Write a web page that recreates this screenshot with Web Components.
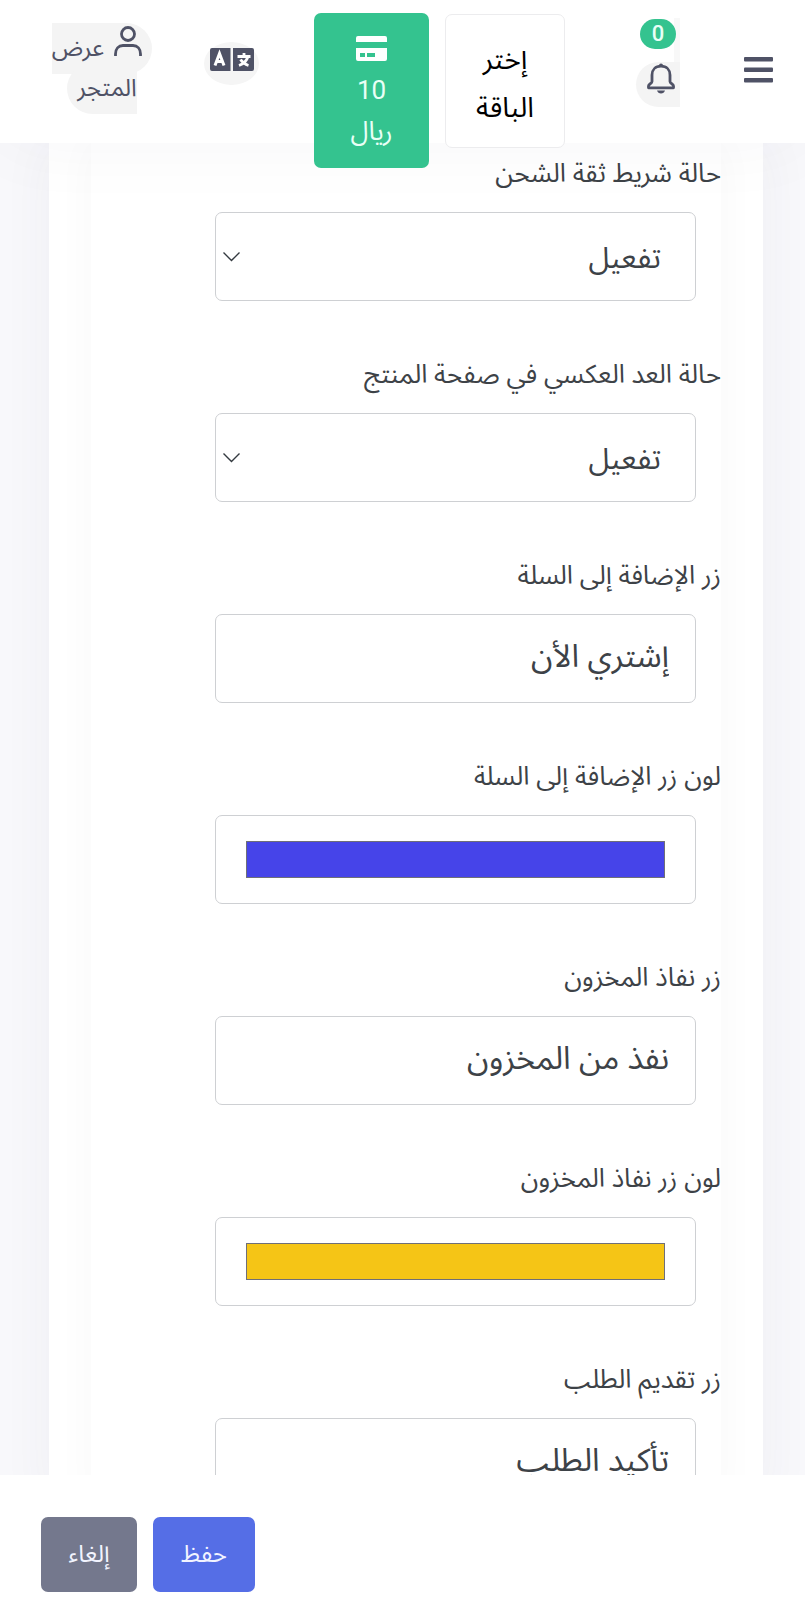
<!DOCTYPE html>
<html lang="ar" dir="rtl">
<head>
<meta charset="utf-8">
<meta name="viewport" content="width=device-width, initial-scale=1">
<title>إعدادات المتجر</title>
<style>
  body { margin: 0; font-family: "Noto Sans Arabic", "Noto Sans", "DejaVu Sans", sans-serif; color: #3d4247; background: #f8f8fb; }
</style>
</head>
<body>
<settings-page></settings-page>
<script>
class BaseElement extends HTMLElement {
  connectedCallback() {
    if (this.shadowRoot) return;
    this.attachShadow({ mode: 'open' }).innerHTML = this.render();
  }
}

customElements.define('top-bar', class extends BaseElement {
  render() {
    return `
<style>
  :host { display: block; position: relative; z-index: 2; height: 143px; flex: none; background: #fff; box-shadow: 0 0 80px rgba(60,60,70,.04); color: #4f5266; }
  nav { display: flex; align-items: flex-start; height: 100%; padding: 0 32px 0 50px; box-sizing: border-box; }
  a, button { font: inherit; color: inherit; text-decoration: none; }
  button { border: 0; padding: 0; background: none; cursor: pointer; }
  svg { display: block; }
  .menu { margin-top: 57px; }
  .bell { display: flex; flex-direction: column; width: 44px; margin: 18px 64px 0 0; position: relative; }
  .strip { width: 6px; height: 44px; background: #f8f8f8; }
  .blob { display: grid; place-items: center; width: 44px; height: 45px; box-sizing: border-box; padding: 0 0 12px 6px; background: #f4f4f4; border-radius: 26px 0 0 26px; }
  .badge { position: absolute; top: 1px; left: 4px; width: 36px; height: 30px; border-radius: 15px; background: #34c38f; color: #e8fff6; font: 500 22px/30px Roboto, sans-serif; text-align: center; }
  .plan { margin: 14px 71px 0 0; width: 120px; height: 134px; border: 1px solid #ececee; border-radius: 7px; background: #fff; color: #000; font-size: 28px; line-height: 48px; padding: 21px 24px 13px; box-sizing: border-box; }
  .credit { margin: 13px 16px 0 0; width: 115px; height: 155px; border-radius: 7px; background: #34c38f; color: #e8fff6; font-size: 26px; line-height: 42px; display: flex; flex-direction: column; align-items: center; padding-top: 23px; box-sizing: border-box; }
  .credit svg { margin-bottom: 8px; }
  .num { font-family: Roboto, sans-serif; }
  .lang { margin: 42px 55px 0 0; width: 55px; height: 43px; border-radius: 50%; background: #f5f5f5; display: grid; place-items: center; padding-bottom: 8px; box-sizing: border-box; }
  .store { width: 104px; margin: 26px auto 0 0; font-size: 24px; line-height: 40px; text-align: center; }
  .store a { background: #f4f4f4; border-radius: 50px; padding: 0 10px; }
  .store svg { display: inline-block; vertical-align: 0; margin-left: 4px; }
</style>
<nav aria-label="الرئيسية">
  <button class="menu" aria-label="القائمة"><svg width="29" height="26" viewBox="0 0 29 26" fill="currentColor"><rect width="29" height="4.500" rx="1"/><rect y="10.500" width="29" height="4.500" rx="1"/><rect y="21" width="29" height="4.500" rx="1"/></svg></button>
  <button class="bell" aria-label="الإشعارات"><span class="strip"></span><span class="blob"><svg width="28" height="31" viewBox="0 0 28 31" fill="none" stroke="currentColor" stroke-width="2.800" stroke-linejoin="round"><path d="M14 3.200C8.500 3.200 5 6.800 5 12v6.500c0 2-3.500 2.500-3.500 4.500v1.800h25V23c0-2-3.500-2.500-3.500-4.500V12c0-5.200-3.500-8.800-9-8.800z"/><path d="M12 2.500a2 2 0 0 1 4 0z" fill="currentColor" stroke="none"/><path d="M10 27.500h8q-1 3-4 3t-4-3z" fill="currentColor" stroke="none"/></svg></span><span class="badge">0</span></button>
  <button class="plan">إختر الباقة</button>
  <button class="credit"><svg width="31" height="25" viewBox="0 0 31 25"><path d="M2 0h27q2 0 2 2v4H0V2q0-2 2-2zM0 12h31v11q0 2-2 2H2q-2 0-2-2z" fill="#fff"/><path d="M4 17h5v4H4zM11 17h8v4h-8z" fill="#34c38f"/></svg><span class="num">10</span><span>ريال</span></button>
  <button class="lang" aria-label="اللغة"><svg width="44" height="23" viewBox="0 0 44 23"><path d="M2 0h18.500v23H2q-2 0-2-2V2q0-2 2-2zM23 0h19q2 0 2 2v19q0 2-2 2H23z" fill="#4f5266"/><path d="M5 17.500 9.500 5.500 14 17.500M6.500 13.500h6" fill="none" stroke="#fff" stroke-width="3"/><path d="M27.500 8.500h13M34 5v3.500M38 8.500q-2 6.500-9 9M30.500 11.500q3 4.500 8 6" fill="none" stroke="#fff" stroke-width="2.800"/></svg></button>
  <div class="store"><a href="#"><svg width="28" height="30" viewBox="0 0 28 30" fill="none" stroke="currentColor" stroke-width="2.800"><circle cx="14" cy="8" r="6.500"/><path d="M1.500 30v-2c0-5 3-8.500 7.500-8.500h10c4.500 0 7.500 3.500 7.500 8.500v2"/></svg> عرض المتجر</a></div>
</nav>`;
  }
});

customElements.define('form-field', class extends BaseElement {
  render() {
    const type = this.getAttribute('type');
    const value = this.getAttribute('value');
    const control = type === 'select'
      ? `<select id="control"><option>${value}</option><option>تعطيل</option></select>`
      : `<input id="control" type="${type}" value="${value}">`;
    return `
<style>
  :host { display: block; margin-bottom: 54px; }
  label { display: block; font-size: 26px; line-height: 40px; margin-bottom: 18px; white-space: nowrap; }
  .box { margin: 0 25px 0 124px; }
  input, select { display: block; width: 100%; height: 89px; box-sizing: border-box; margin: 0; border: 1px solid #ced0d3; border-radius: 7px; background: #fff; color: #3d4247; font: 32px/48px "Noto Sans Arabic", "Noto Sans", "DejaVu Sans", sans-serif; padding: 17px 26px 21px; outline: 0; }
  select { appearance: none; font-size: 30px; padding: 21px 34px 17px; background: #fff url("data:image/svg+xml,%3Csvg xmlns='http://www.w3.org/2000/svg' width='17' height='10' fill='none' stroke='%23343a40' stroke-width='1.4'%3E%3Cpath d='M.5.5l8 8 8-8'/%3E%3C/svg%3E") no-repeat left 7px top 39px; }
  input[type=color] { padding: 25px 30px; appearance: none; }
  ::-webkit-color-swatch-wrapper { padding: 0; }
  ::-webkit-color-swatch { border: 1px solid #6f6f78; border-radius: 0; }
</style>
<label for="control">${this.getAttribute('label')}</label>
<div class="box">${control}</div>`;
  }
});

customElements.define('settings-card', class extends BaseElement {
  render() {
    return `
<style>
  :host { display: block; margin: 0 42px 0 49px; background: #fff; box-shadow: 0 0 50px rgba(50,50,90,.05); padding: 0 42px; }
  section { padding-top: 11px; background: #fff; box-shadow: 0 0 40px rgba(40,40,60,.03); }
</style>
<section><slot></slot></section>`;
  }
});

customElements.define('action-bar', class extends BaseElement {
  render() {
    return `
<style>
  :host { display: flex; position: relative; z-index: 2; flex: none; justify-content: flex-end; gap: 16px; padding: 42px 41px 8px; background: #fff; }
  button { height: 75px; min-width: 96px; padding: 0 26px; border: 0; border-radius: 7px; color: #f2f4ff; font: inherit; font-size: 24px; cursor: pointer; }
  .save { background: #556ee6; min-width: 102px; }
  .cancel { background: #74788d; }
</style>
<button class="save">حفظ</button><button class="cancel">إلغاء</button>`;
  }
});

customElements.define('settings-page', class extends BaseElement {
  render() {
    return `
<style>
  :host { display: flex; flex-direction: column; height: 100vh; }
  main { flex: 1; min-height: 0; overflow: hidden auto; scrollbar-width: none; }
</style>
<top-bar></top-bar>
<main><settings-card>
  <form-field type="select" label="حالة شريط ثقة الشحن" value="تفعيل"></form-field>
  <form-field type="select" label="حالة العد العكسي في صفحة المنتج" value="تفعيل"></form-field>
  <form-field type="text" label="زر الإضافة إلى السلة" value="إشتري الأن"></form-field>
  <form-field type="color" label="لون زر الإضافة إلى السلة" value="#4644e9"></form-field>
  <form-field type="text" label="زر نفاذ المخزون" value="نفذ من المخزون"></form-field>
  <form-field type="color" label="لون زر نفاذ المخزون" value="#f5c516"></form-field>
  <form-field type="text" label="زر تقديم الطلب" value="تأكيد الطلب"></form-field>
</settings-card></main>
<action-bar></action-bar>`;
  }
});
</script>
</body>
</html>
